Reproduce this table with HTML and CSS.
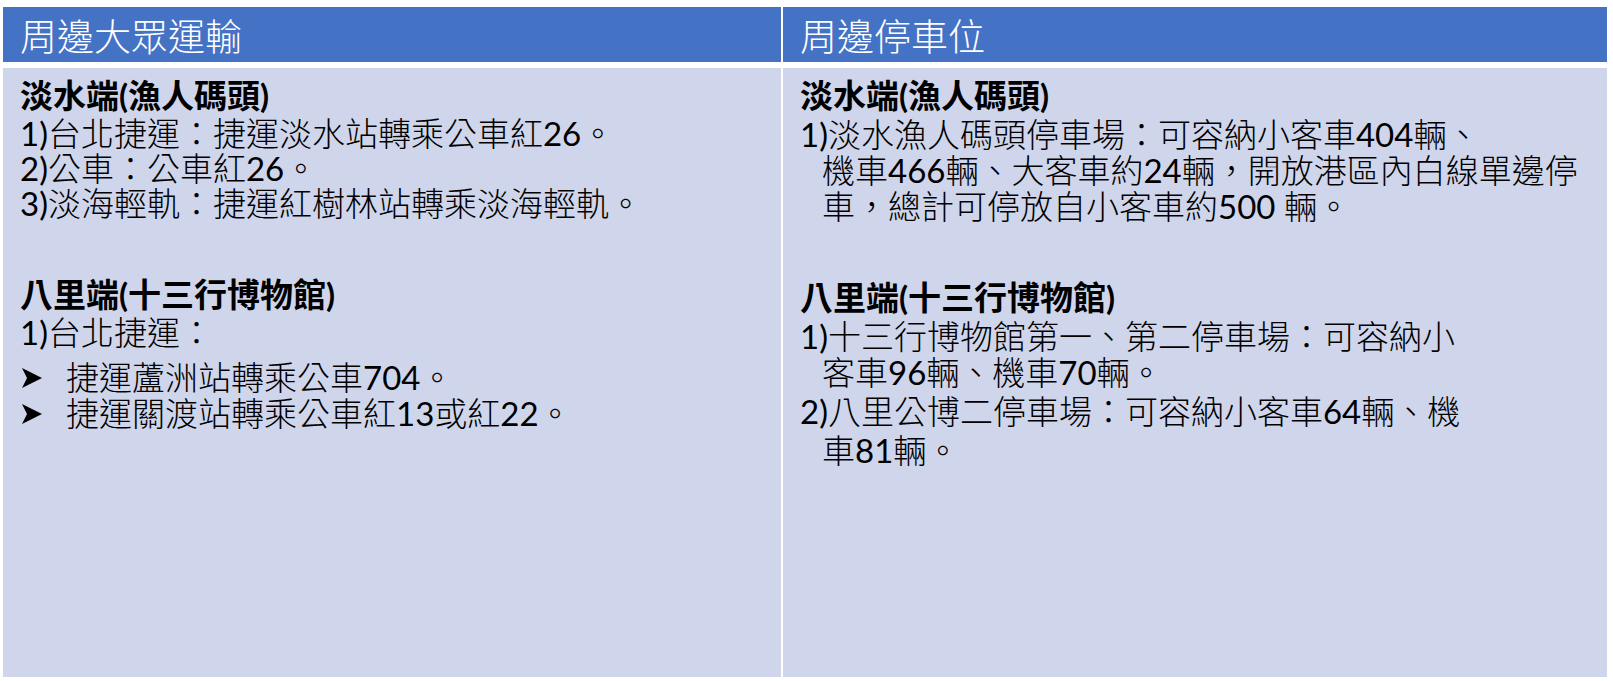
FILE: index.html
```html
<!DOCTYPE html>
<html lang="zh-Hant">
<head>
<meta charset="utf-8">
<title>周邊大眾運輸 / 周邊停車位</title>
<link rel="stylesheet" href="styles.css">
</head>
<body>
<div class="table">
  <div class="th">周邊大眾運輸</div>
  <div class="th">周邊停車位</div>
  <div class="td">
    <div class="section">
      <div class="line title">淡水端(漁人碼頭)</div>
      <div class="line gap3"><span class="num">1)</span>台北捷運：捷運淡水站轉乘公車紅<span class="num">26</span>。</div>
      <div class="line"><span class="num">2)</span>公車：公車紅<span class="num">26</span>。</div>
      <div class="line"><span class="num">3)</span>淡海輕軌：捷運紅樹林站轉乘淡海輕軌。</div>
    </div>
    <div class="section second">
      <div class="line title">八里端(十三行博物館)</div>
      <div class="line gap3"><span class="num">1)</span>台北捷運：</div>
      <div class="line bullet gap10"><svg class="arrow" viewBox="0 0 18 18" width="20" height="20"><path d="M0 0 L18 9 L0 18 L4.5 9 Z" fill="#000"/></svg><span>捷運蘆洲站轉乘公車<span class="num">704</span>。</span></div>
      <div class="line bullet gap1"><svg class="arrow" viewBox="0 0 18 18" width="20" height="20"><path d="M0 0 L18 9 L0 18 L4.5 9 Z" fill="#000"/></svg><span>捷運關渡站轉乘公車紅<span class="num">13</span>或紅<span class="num">22</span>。</span></div>
    </div>
  </div>
  <div class="td">
    <div class="section">
      <div class="line title">淡水端(漁人碼頭)</div>
      <div class="line gap4"><span class="num">1)</span>淡水漁人碼頭停車場：可容納小客車<span class="num">404</span>輛、</div>
      <div class="line cont gap1">機車<span class="num">466</span>輛、大客車約<span class="num">24</span>輛，開放港區內白線單邊停</div>
      <div class="line cont gap1">車，總計可停放自小客車約<span class="num">500 </span>輛。</div>
    </div>
    <div class="section second">
      <div class="line title">八里端(十三行博物館)</div>
      <div class="line gap4"><span class="num">1)</span>十三行博物館第一、第二停車場：可容納小</div>
      <div class="line cont gap1">客車<span class="num">96</span>輛、機車<span class="num">70</span>輛。</div>
      <div class="line gap4"><span class="num">2)</span>八里公博二停車場：可容納小客車<span class="num">64</span>輛、機</div>
      <div class="line cont gap4">車<span class="num">81</span>輛。</div>
    </div>
  </div>
</div>
</body>
</html>
```
FILE: styles.css
```css
html, body {
  margin: 0;
  padding: 0;
  background: #ffffff;
}

body {
  font-family: Lato, "Noto Sans CJK TC", sans-serif;
  color: #000000;
}

.table {
  display: grid;
  grid-template-columns: 778px 824px;
  grid-template-rows: 55px 609px;
  column-gap: 2px;
  row-gap: 6px;
  margin: 7px 0 0 3px;
}

.th {
  background: #4472c4;
  color: #ffffff;
  font-size: 37px;
  font-weight: 300;
  display: flex;
  align-items: center;
  padding-left: 17px;
  white-space: nowrap;
}

.td {
  background: #cfd5ea;
  padding: 10px 0 0 17px;
  font-size: 33px;
  font-weight: 300;
}

.section.second {
  margin-top: 56px;
}

.line {
  height: 35px;
  line-height: 35px;
  white-space: nowrap;
}

.gap1 { margin-top: 1px; }
.gap3 { margin-top: 3px; }
.gap4 { margin-top: 4px; }
.gap10 { margin-top: 10px; }

.title {
  font-weight: 700;
}

.num {
  font-weight: 400;
}

.title .num {
  font-weight: 700;
}

.cont {
  padding-left: 22px;
}

.bullet {
  display: flex;
  align-items: center;
}

.arrow {
  flex: none;
  margin-left: 2px;
  margin-right: 24px;
}
```
